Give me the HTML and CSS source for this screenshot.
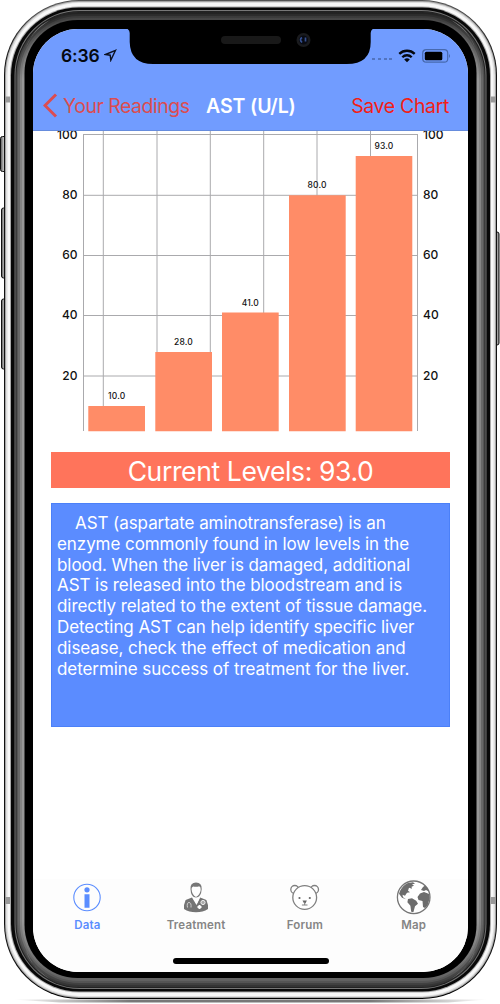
FILE: index.html
```html
<!DOCTYPE html>
<html lang="en">
<head>
<meta charset="utf-8">
<title>AST (U/L)</title>
<link rel="stylesheet" href="styles.css">
</head>
<body>
<main class="phone">
  <svg class="frame" width="500" height="1004" viewBox="0 0 500 1004" aria-hidden="true">
    <defs>
      <linearGradient id="shadow" x1="0" x2="1" y1="0" y2="0">
        <stop offset="0" stop-color="#fff"/><stop offset=".25" stop-color="#777"/><stop offset=".75" stop-color="#777"/><stop offset="1" stop-color="#fff"/>
      </linearGradient>
      <linearGradient id="button" x1="0" x2="1" y1="0" y2="0">
        <stop offset="0" stop-color="#555"/><stop offset=".5" stop-color="#ccc"/><stop offset="1" stop-color="#777"/>
      </linearGradient>
      <linearGradient id="edge" x1="0" x2="0" y1="0" y2="1">
        <stop offset="0" stop-color="#555"/><stop offset=".06" stop-color="#111"/><stop offset=".94" stop-color="#111"/><stop offset="1" stop-color="#000"/>
      </linearGradient>
      <linearGradient id="dim" x1="0" x2="0" y1="0" y2="1">
        <stop offset="0" stop-color="#000" stop-opacity=".6"/><stop offset=".07" stop-color="#000" stop-opacity="0"/><stop offset=".93" stop-color="#000" stop-opacity="0"/><stop offset="1" stop-color="#000" stop-opacity=".4"/>
      </linearGradient>
    </defs>
    <path d="M12 999.5h476l-40 3H60z" fill="url(#shadow)"/>
    <g fill="url(#button)" stroke="#111">
      <rect x=".5" y="136.500" width="7" height="35" rx="2"/>
      <rect x="1.500" y="208" width="6" height="70" rx="2"/>
      <rect x="1.500" y="299" width="6" height="70" rx="2"/>
      <rect x="493" y="232" width="6" height="113" rx="2"/>
    </g>
    <rect x="4" y="0" width="493" height="999" rx="75" fill="url(#edge)"/>
    <rect x="5" y="1" width="491" height="997" rx="74" fill="#a5a5a5"/>
    <rect x="6" y="2" width="489" height="995" rx="73" fill="#dedede"/>
    <rect x="7.500" y="3" width="486" height="993" rx="72" fill="#f8f8f8"/>
    <rect x="10" y="6.500" width="481" height="986" rx="69" fill="#aaa"/>
    <rect x="11" y="7.500" width="479" height="984" rx="68" fill="#080808"/>
    <rect x="14.500" y="10" width="472" height="979" rx="65" fill="#777"/>
    <rect x="15.500" y="11" width="470" height="977" rx="64" fill="#222"/>
    <rect x="16.500" y="12" width="468" height="975" rx="63" fill="#555"/>
    <rect x="18" y="14" width="465" height="971" rx="61" fill="#686868"/>
    <rect x="20" y="16" width="461" height="967" rx="59" fill="#858585"/>
    <rect x="22" y="18" width="457" height="963" rx="57" fill="#989898"/>
    <rect x="16" y="12" width="469" height="975" rx="63" fill="url(#dim)"/>
    <path d="M26 48Q33 28 50 20Q30 33 26 48zM475 48Q468 28 451 20Q471 33 475 48zM26 950Q33 970 50 979Q30 966 26 950zM475 950Q468 970 451 979Q471 966 475 950z" fill="#d0d0d0" opacity=".5"/>
    <rect x="24.500" y="20" width="452" height="958" rx="53"/>
    <path d="M5 96.500h5v6H5zM491 96.500h5v6h-5zM5 897h5v7H5zM491 897h5v7h-5z" fill="#999"/>
  </svg>

  <section class="screen">
    <header class="header">
      <div class="status">
        <div class="clock"><span>6:36</span>
          <svg width="13" height="13" viewBox="0 0 13 13"><path d="M11.500 1.300L1.500 5.500l4.700.7.6 5z" fill="none" stroke="#0b1020" stroke-width="1.400"/></svg>
        </div>
        <div class="indicators">
          <svg width="21" height="4" viewBox="0 0 21 4"><path d="M1 2h3m3 0h3m3 0h3m2 0h3" stroke="#4966aa" stroke-width="2" opacity=".75"/></svg>
          <svg width="18" height="14" viewBox="0 0 18 14"><path d="M1.300 4.900a11 11 0 0 1 15.400 0M4.300 8.200a6.700 6.700 0 0 1 9.400 0" fill="none" stroke="#05080f" stroke-width="2.300"/><path d="M6.200 10.500a4.100 4.100 0 0 1 5.600 0L9 13.300z" fill="#05080f"/></svg>
          <svg width="29" height="14" viewBox="0 0 29 14"><rect x=".7" y=".7" width="25" height="12.500" rx="3.500" fill="none" stroke="#4769ae" stroke-width="1.200"/><rect x="2.800" y="2.800" width="17.500" height="8.500" rx="1.500"/><path d="M27 5q2 2 0 4z" fill="#4769ae"/></svg>
        </div>
      </div>
      <nav class="nav">
        <a class="back"><svg width="15" height="25" viewBox="0 0 15 25"><path d="M13 1.500L2 12.500 13 23.500" fill="none" stroke="#dc4c50" stroke-width="3"/></svg><span>Your Readings</span></a>
        <h1 class="title">AST (U/L)</h1>
        <a class="save">Save Chart</a>
      </nav>
      <svg class="notch" width="252" height="37" viewBox="0 0 252 37">
        <path d="M0 0h252q-5.500 .5-5.500 5v9q0 22-24 22H29Q6 36 5.500 14V5q0-4.500-5.500-5z" transform="translate(-.8)"/>
        <rect x="96" y="8" width="60" height="8" rx="4" fill="#191919"/>
        <circle cx="178.500" cy="12" r="7" fill="#1a1b1e"/><circle cx="178.500" cy="12" r="4.500" fill="#080a12"/>
        <path d="M177 9.500q-3 2 0 5M180.500 9.500v4" fill="none" stroke="#355091" stroke-width="1.700"/>
      </svg>
    </header>

    <svg class="chart" width="435" height="302" viewBox="33 131 435 302">
      <path d="M83 134.500h335M83 195.300h335M83 255.500h335M83 315.500h335M83 376h335M83.500 134v297M103.300 131v300M157 131v300M210.300 131v300M263.700 131v300M317 131v300M370.500 131v300M417.500 134v297" class="grid"/>
      <path d="M88.300 406H145v25.300H88.300zM155.300 352H212v79.300h-56.700zM222 312.600h56.700v118.700H222zM289 195.300h56.700v236H289zM355.700 156h56.600v275.300h-56.600z" fill="#ff8c67"/>
      <g class="axis axis-left">
        <text x="77.500" y="138.500">100</text><text x="77.500" y="199">80</text><text x="77.500" y="259">60</text><text x="77.500" y="319.300">40</text><text x="77.500" y="379.500">20</text>
      </g>
      <g class="axis">
        <text x="423" y="138.500">100</text><text x="423" y="199">80</text><text x="423" y="259">60</text><text x="423" y="319.300">40</text><text x="423" y="379.500">20</text>
      </g>
      <g class="values">
        <text x="116.700" y="399">10.0</text><text x="183.500" y="345">28.0</text><text x="250.300" y="305.500">41.0</text><text x="317" y="188.300">80.0</text><text x="384" y="149">93.0</text>
      </g>
    </svg>

    <div class="levels">Current Levels: 93.0</div>
    <p class="description"><span class="indent">AST (aspartate aminotransferase) is an</span><br>enzyme commonly found in low levels in the<br>blood. When the liver is damaged, additional<br>AST is released into the bloodstream and is<br>directly related to the extent of tissue damage.<br>Detecting AST can help identify specific liver<br>disease, check the effect of medication and<br>determine success of treatment for the liver.</p>

    <footer class="tabs">
      <div class="tab active">
        <svg width="36" height="36" viewBox="0 0 36 36"><circle cx="18" cy="18.500" r="13.200" fill="none" stroke="#5b8dff" stroke-width="1.100"/><circle cx="18" cy="10.800" r="2.600" fill="#5b8dff"/><path d="M15.500 15.200h5v13.600h-5z" fill="#5b8dff"/></svg>
        <span>Data</span>
      </div>
      <div class="tab">
        <svg width="36" height="36" viewBox="0 0 36 36"><path d="M12.500 10Q12 3.500 18 3.500T23.700 10l-.6 4q-1.400 4-5.100 5-3.800-1-5-5z" fill="#777"/><path d="M13.500 10q0-2 1.700-2.500 3.300.7 6-.2Q23 8 22.700 11 22 16 18 18q-4-2-4.500-8z" fill="#fff"/><path d="M14 18.500L7.600 21Q5.400 26 6 30q5 3.300 12 3.300T30 30q.6-4-1.600-9L22.200 18.500 18.500 26z" fill="#747474"/><path d="M14.700 18.500h7L18.700 25z" fill="#fff"/><path d="M9.500 28.500q-1-5 1.500-5t2 5" fill="none" stroke="#ccc"/><circle cx="25" cy="23.500" r="2.100" fill="#aaa" stroke="#eee"/><path d="M21.500 26v4m-2-2h4" stroke="#fff" stroke-width="2"/></svg>
        <span>Treatment</span>
      </div>
      <div class="tab">
        <svg width="36" height="36" viewBox="0 0 36 36"><g fill="#fff" stroke="#808080" stroke-width="1.300"><circle cx="7.800" cy="10.500" r="4"/><circle cx="27.500" cy="10.500" r="4"/><circle cx="17.700" cy="18.500" r="11.900"/></g><g fill="#666"><circle cx="12.500" cy="19" r="1.100"/><circle cx="22.800" cy="19" r="1.100"/><path d="M15.500 21.600h4.400l-1.400 2.600H17z"/></g><path d="M17.700 23v3m-2.800 0h5.600" stroke="#808080"/></svg>
        <span>Forum</span>
      </div>
      <div class="tab">
        <svg width="36" height="36" viewBox="0 0 36 36"><circle cx="17.700" cy="18.300" r="16.300" fill="#fff" stroke="#777" stroke-width="1.300"/><path d="M4 12Q7 6 12 4l5-.7 2 1.500-3 .5 2 1.500-2.500 1 .5 2-3-1-1 3 2 1.500-3 .5-2 3-2.500-1 .5 2.500 3 2-4-1.500-3-4zM12 20l4-.8 4.200 2.500 1.800 3-3 2.500-1.600 6-2.200-.4-.8-6-3-3.500zM24 14.500l4-1.500 5.200 2 .5 4-2 7-2.700 3-2-1-.5-6-4-1-1-3zM25 11l2-3 2-1.500 2.500 2.500L33 12.500l-3-1.500-2 1z" fill="#6d6d6d"/></svg>
        <span>Map</span>
      </div>
      <div class="home"></div>
    </footer>
  </section>
</main>
</body>
</html>
```
FILE: styles.css
```css
body { margin: 0; background: #fff; font-family: Inter, "Liberation Sans", sans-serif; }
.phone { display: grid; width: 500px; height: 1004px; overflow: hidden; }
.frame, .screen { grid-area: 1 / 1; }
.screen { position: relative; display: flex; flex-direction: column; box-sizing: border-box; width: 435px; height: 943px; margin: 29px 0 0 33px; overflow: hidden; border-radius: 45px; background: #fff; }
.header { position: relative; flex: none; height: 102px; background: #719cff; box-shadow: inset 0 -1px #668cdd; }
.notch { position: absolute; left: 92px; top: -1px; }
.status { display: flex; justify-content: space-between; align-items: center; height: 53px; padding: 0 17px 0 28px; }
.clock { display: flex; align-items: center; gap: 4px; font-size: 17.5px; font-weight: 600; letter-spacing: -.15px; color: #05080f; }
.indicators { display: flex; align-items: center; gap: 6px; }
.indicators svg:first-child { margin-top: 7px; }
.nav { display: flex; align-items: center; height: 47px; padding: 0 19px 0 10px; font-size: 19.5px; white-space: nowrap; }
.back { display: flex; align-items: center; gap: 5px; width: 163px; color: #dc4c50; letter-spacing: -.5px; }
.title { width: 103px; margin: 0; font-size: 19.5px; font-weight: 600; letter-spacing: -.1px; color: #fff; }
.save { margin-left: auto; color: #f31e16; letter-spacing: -.35px; }
.chart { flex: none; }
.grid { fill: none; stroke: #aaaaad; stroke-width: 1; }
.axis { font-size: 12px; font-weight: 500; fill: #111; }
.axis-left { text-anchor: end; }
.values { font-size: 8.5px; font-weight: 500; letter-spacing: .15px; text-anchor: middle; fill: #111; }
.levels { flex: none; height: 36px; margin: 19px 18px 0; background: #ff745b; color: #fff; font-size: 26.5px; line-height: 38px; text-align: center; letter-spacing: -.38px; }
.description { box-sizing: border-box; flex: none; height: 224px; margin: 15px 18px 0; padding: 9px 5px; border: 1px solid #4b80f8; background: #5b8cff; color: #fff; font-size: 17px; line-height: 20.8px; letter-spacing: -.07px; white-space: nowrap; }
.indent { padding-left: 18px; }
.tabs { display: grid; grid-template-columns: repeat(4, 108.75px); grid-template-rows: 76px 20px; height: 93px; margin-top: auto; background: #fdfdfd; }
.tab { display: flex; flex-direction: column; gap: 2px; align-items: center; color: #858585; font-size: 11.5px; font-weight: 600; line-height: 16px; letter-spacing: .2px; }
.active { color: #5b8dff; }
.home { grid-column: 1 / -1; justify-self: center; width: 156px; height: 6px; margin-top: 3px; border-radius: 3px; background: #000; }
```
